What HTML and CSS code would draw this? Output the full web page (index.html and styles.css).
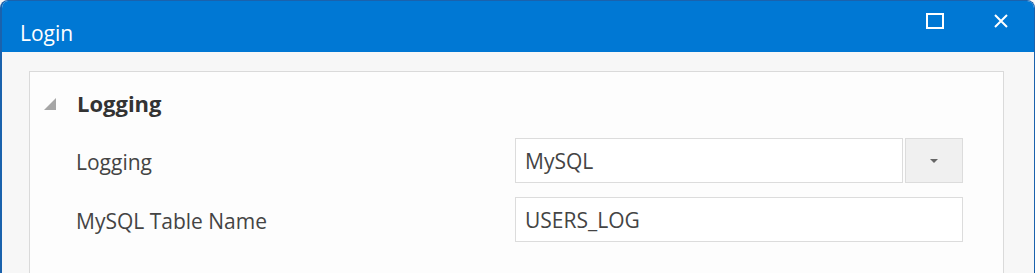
FILE: index.html
```html
<!DOCTYPE html>
<html lang="en">

<head>
    <meta charset="UTF-8">
    <meta name="viewport" content="width=device-width, initial-scale=1.0">
    <title>Login</title>
    <link rel="stylesheet" href="styles.css">
</head>

<body>
    <div class="window">
        <div class="titlebar">
            <span class="title">Login</span>
            <div class="controls">
                <span class="ctrl">
                    <svg width="18" height="16" viewBox="0 0 18 16">
                        <rect x="1" y="1" width="16" height="14" fill="none" stroke="#fff" stroke-width="2" />
                    </svg>
                </span>
                <span class="ctrl">
                    <svg width="16" height="16" viewBox="0 0 16 16">
                        <path d="M2 2 L14 14 M14 2 L2 14" stroke="#fff" stroke-width="2" />
                    </svg>
                </span>
            </div>
        </div>

        <div class="content">
            <div class="panel">
                <div class="group-head">
                    <span class="expander"></span>
                    <span class="group-title">Logging</span>
                </div>

                <div class="row">
                    <label>Logging</label>
                    <div class="combo">
                        <div class="field">MySQL</div>
                        <div class="drop"><span class="arrow"></span></div>
                    </div>
                </div>

                <div class="row">
                    <label>MySQL Table Name</label>
                    <div class="field wide">USERS_LOG</div>
                </div>

                <div class="group-head next">
                    <span class="expander"></span>
                    <span class="group-title">Audit</span>
                </div>
            </div>
        </div>
    </div>
</body>

</html>
```

FILE: styles.css
```css
html, body {
    margin: 0;
    height: 100%;
    overflow: hidden;
}

body {
    font-family: "Open Sans", "Noto Sans", sans-serif;
    background: #f7f7f7;
    color: #444;
}

.window {
    height: 100%;
    border: 1px solid #1a62ad;
    border-left-width: 2px;
    border-bottom: none;
    border-radius: 8px 8px 0 0;
    overflow: hidden;
    background: #f7f7f7;
    box-sizing: border-box;
}

.titlebar {
    display: flex;
    align-items: center;
    justify-content: space-between;
    height: 51px;
    background: #0078d4;
    color: #fff;
    padding-left: 18px;
}

.title {
    font-size: 21px;
    margin-top: 12px;
}

.controls {
    display: flex;
    align-items: center;
    margin-top: -11px;
}

.ctrl {
    display: flex;
    width: 66px;
    justify-content: center;
}

.content {
    padding: 19px 30px 0 27px;
}

.panel {
    background: #fdfdfd;
    border: 1px solid #dadada;
    height: 400px;
    padding: 0 40px 0 13px;
}

.group-head {
    display: flex;
    align-items: center;
    height: 56px;
    padding-top: 3px;
}

.group-head.next {
    padding-top: 9px;
}

.expander {
    width: 0;
    height: 0;
    border-left: 12px solid transparent;
    border-bottom: 12px solid #a6a6a6;
    margin: 2px 21px 0 1px;
}

.group-title {
    font-size: 22px;
    font-weight: 700;
    color: #333;
}

.row {
    display: flex;
    align-items: center;
    height: 59px;
    padding-left: 33px;
}

.row label {
    width: 439px;
    font-size: 21px;
    padding-top: 3px;
}

.combo {
    display: flex;
    gap: 2px;
}

.field {
    box-sizing: border-box;
    height: 45px;
    width: 388px;
    border: 1px solid #dcdcdc;
    background: #fff;
    padding: 0 9px;
    display: flex;
    align-items: center;
    font-size: 21px;
    color: #444;
}

.field.wide {
    width: 448px;
}

.drop {
    box-sizing: border-box;
    width: 58px;
    height: 45px;
    background: #f0f0f0;
    border: 1px solid #dcdcdc;
    display: flex;
    align-items: center;
    justify-content: center;
}

.arrow {
    width: 0;
    height: 0;
    border-left: 4px solid transparent;
    border-right: 4px solid transparent;
    border-top: 4px solid #666;
}
```
